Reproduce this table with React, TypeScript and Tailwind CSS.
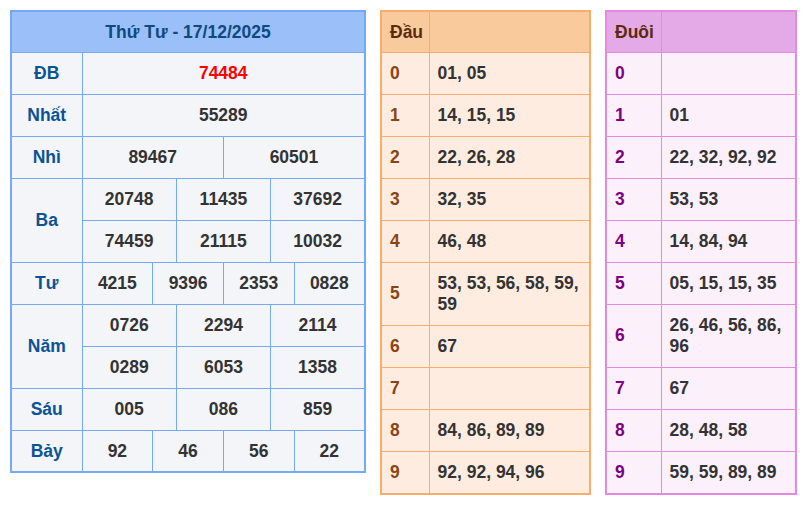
import React from 'react';

const font = "font-['Liberation_Sans',Arial,sans-serif]";

type Cell = { value: string; span: number };

const prizes: { label: string; rows: Cell[][] }[] = [
  { label: 'ĐB', rows: [[{ value: '74484', span: 12 }]] },
  { label: 'Nhất', rows: [[{ value: '55289', span: 12 }]] },
  { label: 'Nhì', rows: [[{ value: '89467', span: 6 }, { value: '60501', span: 6 }]] },
  {
    label: 'Ba',
    rows: [
      ['20748', '11435', '37692'].map((v) => ({ value: v, span: 4 })),
      ['74459', '21115', '10032'].map((v) => ({ value: v, span: 4 })),
    ],
  },
  { label: 'Tư', rows: [['4215', '9396', '2353', '0828'].map((v) => ({ value: v, span: 3 }))] },
  {
    label: 'Năm',
    rows: [
      ['0726', '2294', '2114'].map((v) => ({ value: v, span: 4 })),
      ['0289', '6053', '1358'].map((v) => ({ value: v, span: 4 })),
    ],
  },
  { label: 'Sáu', rows: [['005', '086', '859'].map((v) => ({ value: v, span: 4 }))] },
  { label: 'Bảy', rows: [['92', '46', '56', '22'].map((v) => ({ value: v, span: 3 }))] },
];

const dau = ['01, 05', '14, 15, 15', '22, 26, 28', '32, 35', '46, 48', '53, 53, 56, 58, 59, 59', '67', '', '84, 86, 89, 89', '92, 92, 94, 96'];
const duoi = ['', '01', '22, 32, 92, 92', '53, 53', '14, 84, 94', '05, 15, 15, 35', '26, 46, 56, 86, 96', '67', '28, 48, 58', '59, 59, 89, 89'];

function ResultTable() {
  return (
    <table className="w-[356px] table-fixed border-collapse border-2 border-[#74a9f8] bg-[#f3f5f9]">
      <colgroup>
        <col className="w-[71px]" />
        {Array.from({ length: 12 }).map((_, i) => (
          <col key={i} />
        ))}
      </colgroup>
      <thead>
        <tr className="h-[41px]">
          <th colSpan={13} className="border border-[#74a9f8] bg-[#9bbff9] font-bold text-[#0d4a7e]">
            Thứ Tư - 17/12/2025
          </th>
        </tr>
      </thead>
      <tbody>
        {prizes.map((p) =>
          p.rows.map((row, ri) => (
            <tr key={p.label + ri} className="h-[42px]">
              {ri === 0 && (
                <td rowSpan={p.rows.length} className="border border-[#74a9f8] text-center font-bold text-[#0b5394]">
                  {p.label}
                </td>
              )}
              {row.map((c, ci) => (
                <td
                  key={ci}
                  colSpan={c.span}
                  className={`border border-[#74a9f8] text-center font-bold ${p.label === 'ĐB' ? 'text-[#ff0000]' : 'text-[#333333]'}`}
                >
                  {c.value}
                </td>
              ))}
            </tr>
          ))
        )}
      </tbody>
    </table>
  );
}

function LotoTable({
  title,
  items,
  width,
  labelWidth,
  border,
  head,
  body,
  labelColor,
}: {
  title: string;
  items: string[];
  width: string;
  labelWidth: string;
  border: string;
  head: string;
  body: string;
  labelColor: string;
}) {
  return (
    <table className={`${width} table-fixed border-collapse border-2 ${border} ${body}`}>
      <colgroup>
        <col className={labelWidth} />
        <col />
      </colgroup>
      <thead>
        <tr className={`h-[41px] ${head}`}>
          <th className={`border ${border} px-2 text-left font-bold text-[#5a2a0c]`}>{title}</th>
          <th className={`border ${border}`}></th>
        </tr>
      </thead>
      <tbody>
        {items.map((v, i) => (
          <tr key={i} className="h-[42px]">
            <td className={`border ${border} px-2 font-bold ${labelColor}`}>{i}</td>
            <td className={`border ${border} px-2 py-[10px] font-bold leading-[21px] text-[#333333]`}>{v}</td>
          </tr>
        ))}
      </tbody>
    </table>
  );
}

export default function App() {
  return (
    <div className={`${font} flex items-start gap-[14px] bg-white p-[10px] text-[17.5px]`}>
      <ResultTable />
      <LotoTable
        title="Đầu"
        items={dau}
        width="w-[211px]"
        labelWidth="w-[48px]"
        border="border-[#f9ad6a]"
        head="bg-[#f9ca9c]"
        body="bg-[#feece0]"
        labelColor="text-[#8b4513]"
      />
      <LotoTable
        title="Đuôi"
        items={duoi}
        width="w-[192px]"
        labelWidth="w-[55px]"
        border="border-[#e48ae0]"
        head="bg-[#e4aae7]"
        body="bg-[#fcf0fa]"
        labelColor="text-[#800080]"
      />
    </div>
  );
}
